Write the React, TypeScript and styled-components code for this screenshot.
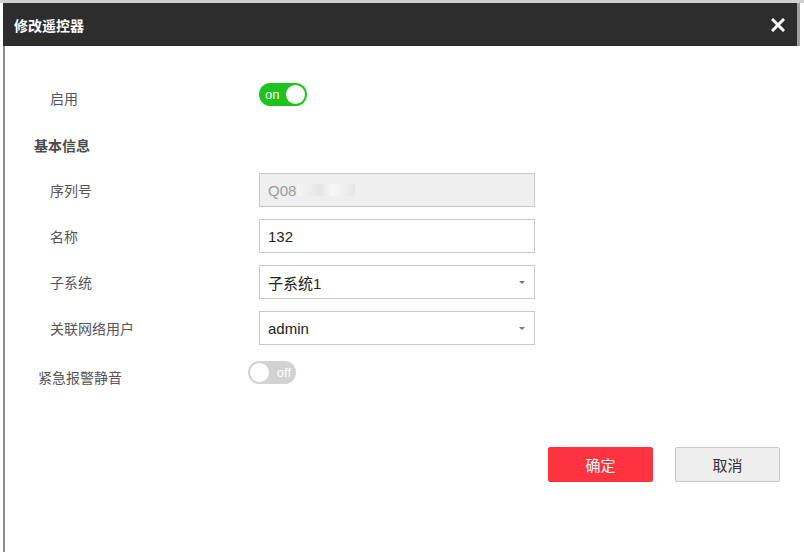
import React from 'react'
import styled, { createGlobalStyle } from 'styled-components'

const GlobalStyle = createGlobalStyle`
  html, body {
    margin: 0;
    padding: 0;
    background: #fff;
  }
  body {
    font-family: "Liberation Sans", "Noto Sans CJK SC", Arial, sans-serif;
  }
`

const Page = styled.div`
  width: 804px;
  height: 559px;
  background: #fff;
  border-top: 3px solid #cfcfcf;
  box-sizing: border-box;
`

const Dialog = styled.div`
  margin-left: 3px;
  width: 797px;
  display: flex;
  flex-direction: column;
`

const Header = styled.div`
  height: 43px;
  background: #2d2d2d;
  border-right: 3px solid #a0a0a0;
  display: flex;
  align-items: center;
  justify-content: space-between;
  padding: 0 11px 0 11px;
`

const Title = styled.div`
  color: #fff;
  font-size: 14px;
  font-weight: 700;
  font-family: "Noto Sans CJK SC", sans-serif;
`

const Close = styled.div`
  width: 16px;
  height: 16px;
  display: flex;
  align-items: center;
  justify-content: center;
`

const Body = styled.div`
  height: 506px;
  border-left: 2px solid #8c8c8c;
  box-sizing: border-box;
  padding-top: 37px;
  display: flex;
  flex-direction: column;
`

const Row = styled.div<{ $indent?: number; $height?: number; $mt?: number }>`
  display: flex;
  align-items: center;
  height: ${(p) => p.$height ?? 34}px;
  margin-top: ${(p) => p.$mt ?? 0}px;
  padding-left: ${(p) => p.$indent ?? 45}px;
`

const Label = styled.div<{ $width: number; $drop?: number }>`
  width: ${(p) => p.$width}px;
  flex-shrink: 0;
  font-size: 14px;
  color: #555;
  font-family: "Noto Sans CJK SC", sans-serif;
  margin-top: ${(p) => p.$drop ?? 0}px;
`

const Section = styled.div`
  padding-left: 29px;
  margin-top: 28px;
  font-size: 14px;
  font-weight: 700;
  color: #4a4a4a;
  font-family: "Noto Sans CJK SC", sans-serif;
  height: 22px;
  line-height: 22px;
`

const Field = styled.div<{ $disabled?: boolean }>`
  position: relative;
  width: 276px;
  height: 34px;
  box-sizing: border-box;
  border: 1px solid #c8c8c8;
  background: ${(p) => (p.$disabled ? '#efefef' : '#fff')};
  color: ${(p) => (p.$disabled ? '#9a9a9a' : '#222')};
  font-size: 15px;
  display: flex;
  align-items: center;
  padding-left: 8px;
  font-family: "Liberation Sans", "Noto Sans CJK SC", sans-serif;
`

const Mask = styled.span`
  display: inline-block;
  width: 58px;
  height: 12px;
  margin-left: 1px;
  background: linear-gradient(90deg, #f6f6f6, #e4e4e4 40%, #f8f8f8 60%, #e6e6e6);
`

const Caret = styled.span`
  position: absolute;
  right: 9px;
  top: 15px;
  width: 0;
  height: 0;
  border-left: 3px solid transparent;
  border-right: 3px solid transparent;
  border-top: 3px solid #777;
`

const Toggle = styled.div<{ $on: boolean }>`
  width: 48px;
  height: 23px;
  border-radius: 12px;
  background: ${(p) => (p.$on ? '#1fc31f' : '#d2d2d2')};
  display: flex;
  flex-direction: ${(p) => (p.$on ? 'row' : 'row-reverse')};
  align-items: center;
  justify-content: space-between;
  padding: 0 2px 0 ${(p) => (p.$on ? 6 : 2)}px;
  padding-right: ${(p) => (p.$on ? 2 : 5)}px;
  box-sizing: border-box;
`

const Knob = styled.div`
  width: 19px;
  height: 19px;
  border-radius: 50%;
  background: #fff;
`

const ToggleText = styled.span`
  color: #fff;
  font-size: 13px;
  font-family: "Liberation Sans", Arial, sans-serif;
  line-height: 1;
`

const Footer = styled.div`
  margin-top: 63px;
  display: flex;
  justify-content: flex-end;
  gap: 22px;
  padding-right: 20px;
`

const Button = styled.button<{ $primary?: boolean }>`
  width: 105px;
  height: 35px;
  border-radius: 2px;
  font-size: 15px;
  font-family: "Noto Sans CJK SC", sans-serif;
  cursor: pointer;
  border: 1px solid ${(p) => (p.$primary ? '#fd3340' : '#c8c8c8')};
  background: ${(p) => (p.$primary ? '#fd3340' : '#eeeeee')};
  color: ${(p) => (p.$primary ? '#fff' : '#333')};
`

export default function App() {
  return (
    <Page>
      <GlobalStyle />
      <Dialog>
        <Header>
          <Title>修改遥控器</Title>
          <Close>
            <svg width="14" height="14" viewBox="0 0 14 14">
              <path d="M2 2 L12 12 M12 2 L2 12" stroke="#fff" strokeWidth="3" strokeLinecap="square" />
            </svg>
          </Close>
        </Header>
        <Body>
          <Row $height={23}>
            <Label $width={209} $drop={6}>启用</Label>
            <Toggle $on>
              <ToggleText>on</ToggleText>
              <Knob />
            </Toggle>
          </Row>
          <Section>基本信息</Section>
          <Row $mt={17}>
            <Label $width={209}>序列号</Label>
            <Field $disabled>
              Q08<Mask />
            </Field>
          </Row>
          <Row $mt={12}>
            <Label $width={209}>名称</Label>
            <Field>132</Field>
          </Row>
          <Row $mt={12}>
            <Label $width={209}>子系统</Label>
            <Field>
              子系统1
              <Caret />
            </Field>
          </Row>
          <Row $mt={12}>
            <Label $width={209}>关联网络用户</Label>
            <Field>
              admin
              <Caret />
            </Field>
          </Row>
          <Row $mt={16} $height={23} $indent={33}>
            <Label $width={210} $drop={8}>紧急报警静音</Label>
            <Toggle $on={false}>
              <ToggleText>off</ToggleText>
              <Knob />
            </Toggle>
          </Row>
          <Footer>
            <Button $primary>确定</Button>
            <Button>取消</Button>
          </Footer>
        </Body>
      </Dialog>
    </Page>
  )
}
